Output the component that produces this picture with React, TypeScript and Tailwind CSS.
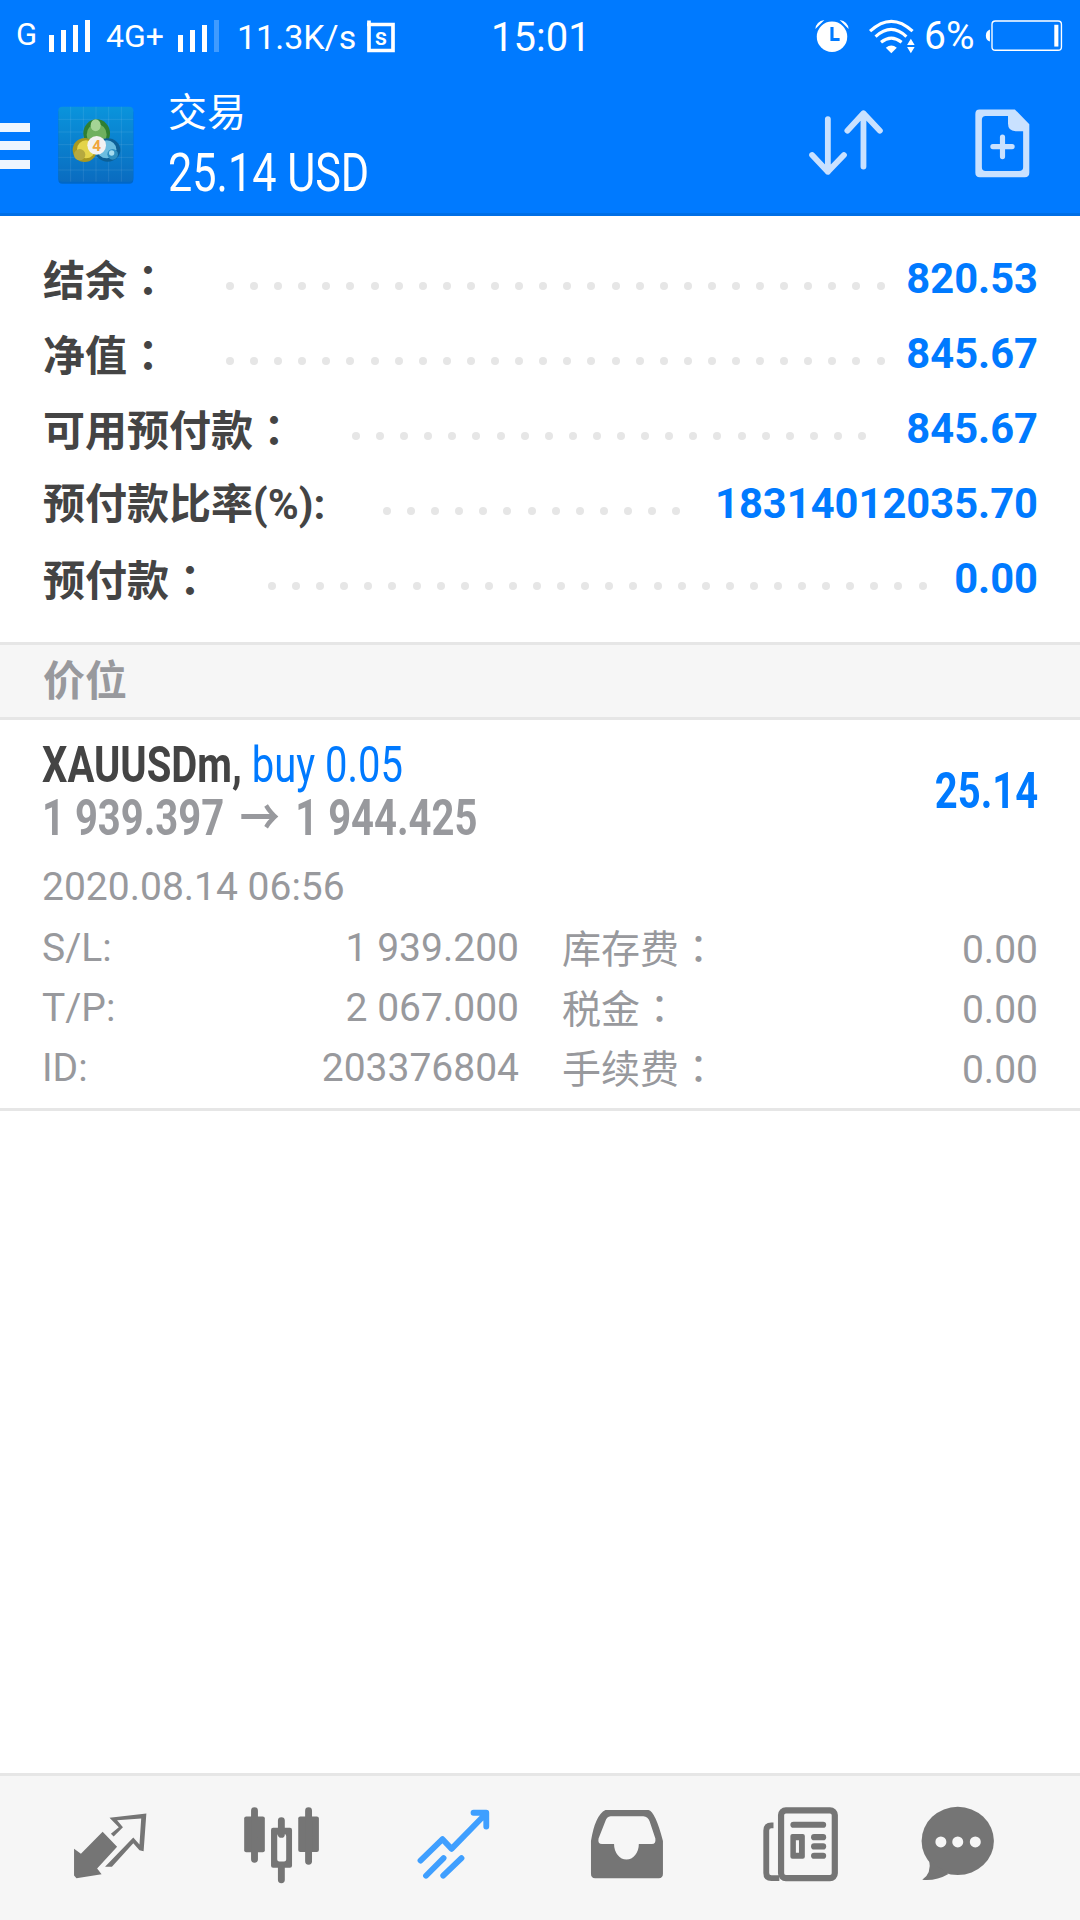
import React from "react";

const CJK = "font-['Roboto','Noto_Sans_CJK_SC',sans-serif]";
const Colon = () => <span className="font-['Noto_Sans_CJK_TC',sans-serif]">：</span>;

function Dots({ n }: { n: number }) {
  return (
    <div className="flex gap-[16.1px] items-center mt-[13px]">
      {Array.from({ length: n }).map((_, i) => (
        <span key={i} className="block w-[8px] h-[8px] rounded-full bg-[#e6e6e6]" />
      ))}
    </div>
  );
}

function Row({ label, colon, w, n, value }: { label: string; colon?: boolean; w: number; n: number; value: string }) {
  return (
    <div className="flex items-center h-[75px]">
      <div className="text-[42px] font-bold text-[#444444] whitespace-nowrap shrink-0" style={{ width: w }}>
        {label}
        {colon && <Colon />}
      </div>
      <Dots n={n} />
      <div className="ml-auto text-[41.7px] font-bold text-[#007aff] whitespace-nowrap">{value}</div>
    </div>
  );
}

function Detail({ a, av, b, bv }: { a: string; av: string; b: string; bv: string }) {
  return (
    <div className="flex items-center h-[60px] text-[39px] leading-[60px] text-[#98999d] whitespace-nowrap">
      <div className="w-[477px] flex justify-between items-baseline">
        <span>{a}</span>
        <span>{av}</span>
      </div>
      <div className="ml-[43px] flex-1 flex justify-between items-baseline">
        <span>
          {b}
          <Colon />
        </span>
        <span className="mt-[-2px]">{bv}</span>
      </div>
    </div>
  );
}

function Logo() {
  return (
    <svg width="90" height="90" viewBox="0 0 270 270" className="shrink-0">
      <defs>
        <linearGradient id="t" x1="0" y1="0" x2="0" y2="1">
          <stop offset="0" stopColor="#0a94dc" />
          <stop offset="1" stopColor="#0a6cc0" />
        </linearGradient>
        <filter id="b" x="-20%" y="-20%" width="140%" height="140%">
          <feGaussianBlur stdDeviation="2" />
        </filter>
      </defs>
      <rect x="25" y="26" width="225" height="225" rx="12" fill="#0060b0" opacity="0.7" filter="url(#b)" />
      <rect x="25" y="20" width="225" height="225" rx="12" fill="url(#t)" />
      <path d="M62 20V245M100 20V245M138 20V245M176 20V245M214 20V245M25 58H250M25 96H250M25 134H250M25 172H250M25 210H250" stroke="#ffffff" strokeOpacity="0.09" strokeWidth="3" />
      <ellipse cx="140" cy="100" rx="40" ry="42" fill="#2f7f32" />
      <ellipse cx="140" cy="104" rx="30" ry="32" fill="#6fb05f" />
      <ellipse cx="137" cy="76" rx="15" ry="18" fill="#a5d495" />
      <circle cx="104" cy="150" r="36" fill="#a8981f" />
      <circle cx="108" cy="148" r="27" fill="#e4d44a" />
      <circle cx="89" cy="164" r="17" fill="#b5a93f" />
      <ellipse cx="173" cy="150" rx="38" ry="35" fill="#0c5f96" />
      <ellipse cx="170" cy="148" rx="29" ry="27" fill="#6cbde0" />
      <circle cx="188" cy="163" r="16" fill="#2f8fc0" />
      <circle cx="185" cy="159" r="8" fill="#a6dcef" />
      <circle cx="140" cy="136" r="28" fill="#f2f2f2" />
      <text x="140" y="153" textAnchor="middle" fontSize="46" fontWeight="700" fill="#f0a63c" fontFamily="Roboto">4</text>
    </svg>
  );
}

function Bars({ dim }: { dim?: boolean }) {
  return (
    <svg width="42" height="32" viewBox="0 0 42 32" className="shrink-0">
      <rect x="0" y="15" width="5" height="17" fill="#fff" />
      <rect x="12" y="10" width="5" height="22" fill="#fff" />
      <rect x="24" y="5" width="5" height="27" fill="#fff" />
      <rect x="36" y="0" width="5" height="32" fill="#fff" fillOpacity={dim ? 0.25 : 1} />
    </svg>
  );
}

function StatusBar() {
  return (
    <div className="relative h-[72px] flex items-center text-white text-[34px] whitespace-nowrap">
      <span className="ml-[16px] w-[33px] text-[31px] mt-[-1px]">G</span>
      <Bars />
      <span className="ml-[15px] w-[60px] text-[32px] mt-[-1px]">4G+</span>
      <span className="ml-[12px]"><Bars dim /></span>
      <span className="ml-[17px] w-[118px] mt-[2px]">11.3K/s</span>
      <svg width="28" height="33" viewBox="1064 60 84 96" className="ml-[12px] shrink-0">
        <path d="M1070 60V150H1142V72H1064" fill="none" stroke="#fff" strokeWidth="11" />
        <text x="1106" y="132" textAnchor="middle" fontSize="72" fontWeight="500" fill="#fff" fontFamily="Roboto">s</text>
      </svg>
      <span className="ml-[96px] text-[40px] mt-[4px]">15:01</span>
      <div className="ml-auto mr-[17px] flex items-center">
        <svg width="36" height="36" viewBox="796 56 104 104" className="shrink-0">
          <circle cx="848" cy="110" r="44" fill="#fff" />
          <path d="M800 88Q802 66 826 62ZM896 88Q894 66 870 62Z" fill="#fff" />
          <path d="M848 82V118H870" fill="none" stroke="#007aff" strokeWidth="9" />
        </svg>
        <svg width="48" height="36" viewBox="948 54 140 104" className="ml-[18px] shrink-0">
          <path d="M954 92Q1016 34 1078 92M970 108Q1016 66 1060 108M986 124Q1016 100 1046 124" fill="none" stroke="#fff" strokeWidth="9" />
          <path d="M1000 140Q1016 128 1032 140L1016 156Z" fill="#fff" />
          <path d="M1062 132L1073 114L1084 132ZM1062 138H1084L1073 156Z" fill="#fff" />
        </svg>
        <span className="ml-[8px] text-[39px] w-[52px]">6%</span>
        <svg width="78" height="32" viewBox="1290 62 228 94" className="ml-[9px] shrink-0">
          <rect x="1310" y="65" width="204" height="86" rx="10" fill="none" stroke="#fff" strokeWidth="4" />
          <rect x="1493" y="76" width="12" height="64" fill="#fff" />
          <path d="M1304 90V125Q1292 122 1292 108Q1292 94 1304 90Z" fill="#fff" />
        </svg>
      </div>
    </div>
  );
}

function Header() {
  return (
    <div className="bg-[#007aff] border-b-[3px] border-[#006fe6] h-[216px] flex flex-col shrink-0">
      <StatusBar />
      <div className="relative flex-1 flex items-center">
        <div className="flex flex-col gap-[9.5px] w-[30px] shrink-0 mt-[6px]">
          <span className="block h-[9px] bg-[#eef6ff]" />
          <span className="block h-[9px] bg-[#eef6ff]" />
          <span className="block h-[9px] bg-[#eef6ff]" />
        </div>
        <div className="ml-[20px] mt-[5px]"><Logo /></div>
        <div className="ml-[28px] text-white mt-[4px]">
          <div className="text-[39px] leading-[48px] h-[48px]">交易</div>
          <div className="text-[53px] leading-[56px] h-[56px] mt-[8px] scale-x-[0.815] origin-left whitespace-nowrap">25.14 USD</div>
        </div>
        <svg width="76" height="68" viewBox="778 332 222 198" className="absolute left-[808px] top-[37px]">
          <path d="M836 361V515M790 466L836 515L883 466M940 500V345M893 395L940 344L988 395" fill="none" stroke="#c9e1ff" strokeWidth="17" strokeLinecap="round" strokeLinejoin="round" />
        </svg>
        <svg width="55" height="69" viewBox="1262 332 160 200" className="absolute left-[975px] top-[37px]">
          <path fillRule="evenodd" fill="#c9e1ff" d="M1275 333H1378L1420 376V517Q1420 530 1407 530H1276Q1263 530 1263 517V346Q1263 333 1275 333ZM1293 352Q1282 352 1282 363V501Q1282 512 1293 512H1390Q1402 512 1402 501V396H1380Q1358 396 1358 374V352Z" />
          <path d="M1342 413V470M1314 441H1370" stroke="#c9e1ff" strokeWidth="15" strokeLinecap="round" />
        </svg>
      </div>
    </div>
  );
}

function TabBar() {
  return (
    <div className="mt-auto h-[147px] shrink-0 bg-[#f6f6f6] border-t-[3px] border-[#e6e6e6] flex">
      <svg width="540" height="144" viewBox="0 56.5 1568 418" className="shrink-0">
        <path fill="#757575" d="M215 268L235 282L298 218L340 262L282 325L295 342L222 353L215 345Z" />
        <path fill="#757575" d="M318 178L425 165L417 275L405 272L387 252L325 320L305 320L387 235L405 255L410 180L340 185L357 205L330 232L322 224L345 205Z" />
        <g fill="#757575">
          <rect x="709" y="174" width="60" height="104" rx="6" />
          <rect x="866" y="174" width="60" height="103" rx="6" />
          <path fillRule="evenodd" d="M793 207H842Q848 207 848 213V317Q848 323 842 323H793Q787 323 787 317V213Q787 207 793 207ZM811 225Q805 225 805 231V299Q805 305 811 305H825Q831 305 831 299V231Q831 225 825 225Z" />
        </g>
        <path d="M739 157V298M896 157V304M817 186V226M817 320V358" stroke="#757575" strokeWidth="20" strokeLinecap="round" />
        <path d="M1221 302L1285 240L1311 268L1405 172M1375 163H1412V203M1237 346L1288 295M1287 346L1340 295" fill="none" stroke="#3f9fff" strokeWidth="17" strokeLinecap="round" strokeLinejoin="round" />
      </svg>
      <svg width="540" height="144" viewBox="0 56.5 1568 418" className="shrink-0">
        <path fill="#757575" fillRule="evenodd" d="M190 155H315Q335 160 357 245V340Q357 353 345 353H160Q148 353 148 340V245Q160 170 190 155ZM205 173H300Q314 175 318 187L335 238Q337 254 325 254H287A36 45 0 0 1 215 254H180Q167 254 170 238L190 187Q193 175 205 173Z" />
        <rect x="700" y="156" width="156" height="197" rx="14" fill="none" stroke="#757575" strokeWidth="18" />
        <path d="M678 200H672Q657 200 657 215V338Q657 353 672 353H695" fill="none" stroke="#757575" strokeWidth="17" />
        <g fill="#757575">
          <rect x="727" y="189" width="104" height="18" rx="9" />
          <rect x="787" y="225" width="44" height="18" rx="9" />
          <rect x="787" y="252" width="44" height="18" rx="9" />
          <rect x="787" y="279" width="44" height="18" rx="9" />
          <path fillRule="evenodd" d="M733 225H763Q769 225 769 231V291Q769 297 763 297H733Q727 297 727 291V231Q727 225 733 225ZM743 243V279H752V243Z" />
        </g>
        <ellipse cx="1213" cy="245" rx="105" ry="99" fill="#757575" />
        <path d="M1130 300Q1138 338 1110 358Q1150 362 1186 341Z" fill="#757575" />
        <g fill="#f6f6f6">
          <circle cx="1164" cy="248" r="16" />
          <circle cx="1213" cy="248" r="16" />
          <circle cx="1264" cy="248" r="16" />
        </g>
      </svg>
    </div>
  );
}

export default function App() {
  return (
    <div className={`w-[1080px] h-[1920px] bg-white flex flex-col overflow-hidden ${CJK}`}>
      <Header />
      <div className="pl-[43px] pr-[42px] pt-[26px] h-[426px] shrink-0">
        <Row label="结余" colon w={183} n={28} value="820.53" />
        <Row label="净值" colon w={183} n={28} value="845.67" />
        <Row label="可用预付款" colon w={309} n={22} value="845.67" />
        <Row label="预付款比率(%):" w={340} n={13} value="18314012035.70" />
        <Row label="预付款" colon w={225} n={28} value="0.00" />
      </div>
      <div className="h-[78px] shrink-0 border-y-[3px] border-[#e6e6e6] bg-[#f6f6f6] flex items-center pl-[43px] text-[42px] font-bold text-[#98999d]">
        价位
      </div>
      <div className="border-b-[3px] border-[#e6e6e6] h-[391px] shrink-0 pl-[42px] pr-[42px] pt-[17px]">
        <div className="flex items-center h-[108px]">
          <div className="flex flex-col">
            <div className="h-[54px] leading-[54px] text-[50px] font-bold text-[#444444] scale-x-[0.8] origin-left whitespace-nowrap">
              XAUUSDm, <span className="font-normal text-[#007aff]">buy 0.05</span>
            </div>
            <div className="h-[53px] leading-[53px] text-[50px] font-bold text-[#98999d] scale-x-[0.8] origin-left whitespace-nowrap">
              1 939.397 <span className="mx-[7px]">→</span> 1 944.425
            </div>
          </div>
          <div className="ml-auto text-[50px] font-bold text-[#007aff] scale-x-[0.8] origin-right">25.14</div>
        </div>
        <div className="text-[39px] text-[#98999d] h-[52px] leading-[52px] mt-[16px] mb-[5px]">2020.08.14 06:56</div>
        <Detail a="S/L:" av="1 939.200" b="库存费" bv="0.00" />
        <Detail a="T/P:" av="2 067.000" b="税金" bv="0.00" />
        <Detail a="ID:" av="203376804" b="手续费" bv="0.00" />
      </div>
      <TabBar />
    </div>
  );
}
